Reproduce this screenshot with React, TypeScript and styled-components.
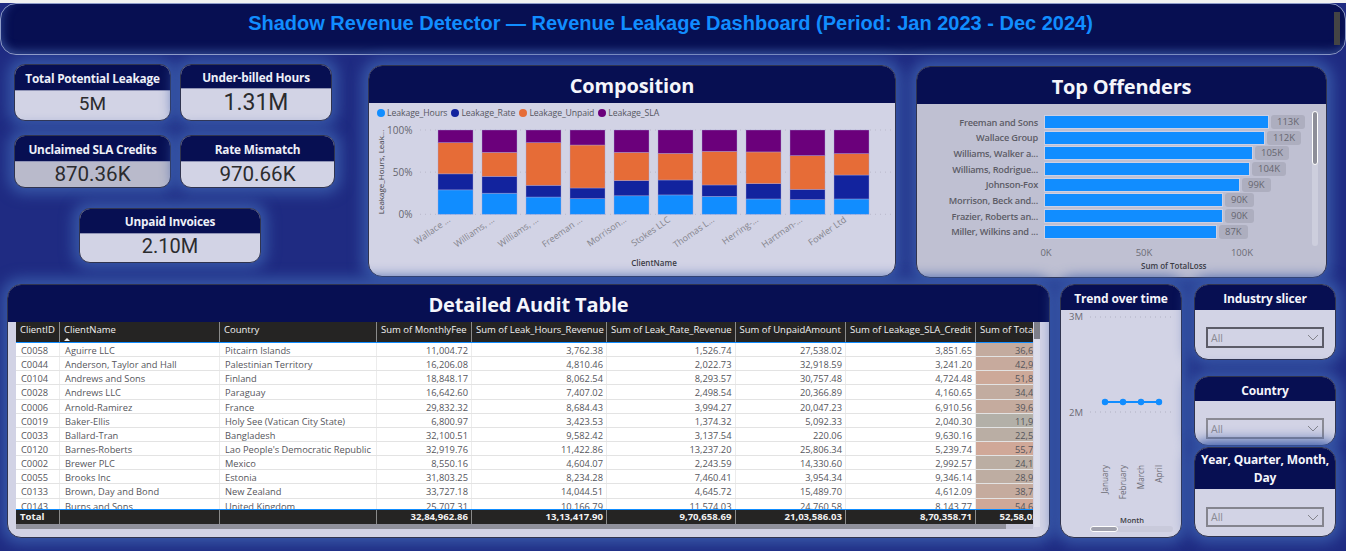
import React from "react";
import styled, { createGlobalStyle } from "styled-components";

const GlobalStyle = createGlobalStyle`
    html, body {
        margin: 0;
        padding: 0;
        overflow: hidden;
        background: #1f2b82;
    }
`;

const UI_FONT = `"Open Sans", "Noto Sans", sans-serif`;
const NAVY = "#070f52";
const PANEL = "#d2d3e5";
const GLOW = "0 0 14px 6px #3757a7";
const COLS = "44px 160px 157px 95px 135px 128.5px 110.5px 130px 85px";

interface AuditRow {
    id: string;
    name: string;
    country: string;
    fee: number;
    hours: number;
    rate: number;
    unpaid: number;
    sla: number;
}

const auditRows: AuditRow[] = [
    { id: "C0058", name: "Aguirre LLC", country: "Pitcairn Islands", fee: 11004.72, hours: 3762.38, rate: 1526.74, unpaid: 27538.02, sla: 3851.65 },
    { id: "C0044", name: "Anderson, Taylor and Hall", country: "Palestinian Territory", fee: 16206.08, hours: 4810.46, rate: 2022.73, unpaid: 32918.59, sla: 3241.2 },
    { id: "C0104", name: "Andrews and Sons", country: "Finland", fee: 18848.17, hours: 8062.54, rate: 8293.57, unpaid: 30757.48, sla: 4724.48 },
    { id: "C0028", name: "Andrews LLC", country: "Paraguay", fee: 16642.6, hours: 7407.02, rate: 2498.54, unpaid: 20366.89, sla: 4160.65 },
    { id: "C0006", name: "Arnold-Ramirez", country: "France", fee: 29832.32, hours: 8684.43, rate: 3994.27, unpaid: 20047.23, sla: 6910.56 },
    { id: "C0019", name: "Baker-Ellis", country: "Holy See (Vatican City State)", fee: 6800.97, hours: 3423.53, rate: 1374.32, unpaid: 5092.33, sla: 2040.3 },
    { id: "C0033", name: "Ballard-Tran", country: "Bangladesh", fee: 32100.51, hours: 9582.42, rate: 3137.54, unpaid: 220.06, sla: 9630.16 },
    { id: "C0120", name: "Barnes-Roberts", country: "Lao People's Democratic Republic", fee: 32919.76, hours: 11422.86, rate: 13237.2, unpaid: 25806.34, sla: 5239.74 },
    { id: "C0002", name: "Brewer PLC", country: "Mexico", fee: 8550.16, hours: 4604.07, rate: 2243.59, unpaid: 14330.6, sla: 2992.57 },
    { id: "C0055", name: "Brooks Inc", country: "Estonia", fee: 31803.25, hours: 8234.28, rate: 7460.41, unpaid: 3954.34, sla: 9346.14 },
    { id: "C0133", name: "Brown, Day and Bond", country: "New Zealand", fee: 33727.18, hours: 14044.51, rate: 4645.72, unpaid: 15489.7, sla: 4612.09 },
    { id: "C0143", name: "Burns and Sons", country: "United Kingdom", fee: 25707.31, hours: 10166.79, rate: 11574.03, unpaid: 24760.58, sla: 8143.77 },
];

const compositionBars = [
    { label: "Wallace ...", hours: 29, rate: 48, unpaid: 85 },
    { label: "Williams, ...", hours: 25, rate: 45, unpaid: 73.5 },
    { label: "Williams, ...", hours: 20.5, rate: 34.4, unpaid: 85 },
    { label: "Freeman ...", hours: 18.6, rate: 31.2, unpaid: 82.2 },
    { label: "Morrison...", hours: 22, rate: 40, unpaid: 73.5 },
    { label: "Stokes LLC", hours: 23, rate: 40.7, unpaid: 72.3 },
    { label: "Thomas L...", hours: 21.3, rate: 34.8, unpaid: 74.7 },
    { label: "Herring-...", hours: 18.2, rate: 36.4, unpaid: 74 },
    { label: "Hartman-...", hours: 17.4, rate: 29.6, unpaid: 69.6 },
    { label: "Fowler Ltd", hours: 18.2, rate: 46.6, unpaid: 72 },
];

const offenders = [
    { name: "Freeman and Sons", width: 223, value: "113K" },
    { name: "Wallace Group", width: 219, value: "112K" },
    { name: "Williams, Walker a...", width: 207, value: "105K" },
    { name: "Williams, Rodrigue...", width: 204, value: "104K" },
    { name: "Johnson-Fox", width: 194, value: "99K" },
    { name: "Morrison, Beck and...", width: 177, value: "90K" },
    { name: "Frazier, Roberts an...", width: 177, value: "90K" },
    { name: "Miller, Wilkins and ...", width: 171, value: "87K" },
];

const legend = [
    { name: "Leakage_Hours", color: "#118dff" },
    { name: "Leakage_Rate", color: "#12239e" },
    { name: "Leakage_Unpaid", color: "#e66c37" },
    { name: "Leakage_SLA", color: "#6b007b" },
];

const money = (n: number) => n.toLocaleString("en-US", { minimumFractionDigits: 2, maximumFractionDigits: 2 });

const lossOf = (r: AuditRow) => r.hours + r.rate + r.unpaid + r.sla;

// grey for small totals, salmon for large ones
const lossColor = (loss: number) => {
    const t = Math.min(1, Math.max(0, (loss - 11000) / 45000));
    const r = Math.round(178 + (208 - 178) * t);
    const g = Math.round(176 + (168 - 176) * t);
    const b = Math.round(168 + (152 - 168) * t);
    return `rgb(${r},${g},${b})`;
};

const Page = styled.div`
    width: 1346px;
    height: 551px;
    overflow: hidden;
    box-sizing: border-box;
    border-top: 3px solid #f1f1f1;
    background: #1f2b82;
    font-family: ${UI_FONT};
    display: flex;
    flex-direction: column;
`;

const TopBanner = styled.header`
    position: relative;
    height: 52px;
    flex: none;
    box-sizing: border-box;
    border: 1px solid #8f9cc9;
    border-radius: 16px;
    background: ${NAVY};
    box-shadow: inset 0 -9px 10px -6px #31488f, inset 9px 0 10px -7px #263a86;
    display: flex;
    justify-content: center;
    padding-top: 7px;
`;

const BannerTitle = styled.h1`
    margin: 0;
    padding-right: 5px;
    font-family: "Liberation Sans", Arial, sans-serif;
    font-size: 20px;
    font-weight: 700;
    line-height: 24px;
    color: #118dff;
`;

const BannerScroll = styled.div`
    position: absolute;
    top: 8px;
    right: 5px;
    width: 6px;
    height: 33px;
    background: #444;
`;

const TopRow = styled.section`
    display: flex;
    flex: none;
    height: 220px;
    margin-top: 9px;
`;

const KpiBlock = styled.div`
    width: 368px;
    flex: none;
    box-sizing: border-box;
    padding-left: 14px;
    display: flex;
    flex-direction: column;
`;

const KpiRow = styled.div<{ $top?: number; $left?: number }>`
    display: flex;
    gap: 9px;
    margin-top: ${(p) => p.$top ?? 0}px;
    margin-left: ${(p) => p.$left ?? 0}px;
`;

const KpiCard = styled.div<{ $w: number; $h: number; $muted?: boolean }>`
    width: ${(p) => p.$w}px;
    height: ${(p) => p.$h}px;
    box-sizing: border-box;
    border: 1px solid #30344f;
    border-radius: 11px;
    overflow: hidden;
    background: ${(p) => (p.$muted ? "#b9bacb" : PANEL)};
    box-shadow: ${GLOW};
    display: flex;
    flex-direction: column;
`;

const KpiTitle = styled.div<{ $h: number }>`
    height: ${(p) => p.$h}px;
    flex: none;
    background: ${NAVY};
    color: #eef0f8;
    font-size: 11.8px;
    font-weight: 700;
    letter-spacing: -0.2px;
    display: flex;
    align-items: center;
    justify-content: center;
    border-bottom: 1px solid #8f93b5;
    box-sizing: border-box;
`;

const KpiValue = styled.div<{ $size: number }>`
    flex: 1;
    display: flex;
    align-items: center;
    justify-content: center;
    font-family: Roboto, sans-serif;
    font-size: ${(p) => p.$size}px;
    color: #2b2b2e;
    padding-bottom: 4px;
`;

const Panel = styled.div<{ $w: number; $h: number; $top?: number; $left?: number; $tone?: string }>`
    position: relative;
    width: ${(p) => p.$w}px;
    height: ${(p) => p.$h}px;
    flex: none;
    margin-top: ${(p) => p.$top ?? 0}px;
    margin-left: ${(p) => p.$left ?? 0}px;
    box-sizing: border-box;
    border: 1px solid #30344f;
    border-radius: 14px;
    overflow: hidden;
    background: ${(p) => p.$tone ?? PANEL};
    box-shadow: ${GLOW};
    display: flex;
    flex-direction: column;
`;

const PanelTitle = styled.h2<{ $h: number; $size?: number; $shift?: number }>`
    margin: 0;
    height: ${(p) => p.$h}px;
    flex: none;
    box-sizing: border-box;
    padding-top: ${(p) => p.$shift ?? 2}px;
    background: ${NAVY};
    color: #f4f5fb;
    font-size: ${(p) => p.$size ?? 20}px;
    font-weight: 700;
    line-height: 1.42;
    text-align: center;
    letter-spacing: -0.15px;
    display: flex;
    align-items: center;
    justify-content: center;
`;

const Legend = styled.div`
    height: 20px;
    flex: none;
    box-sizing: border-box;
    display: flex;
    align-items: center;
    padding: 0 0 1px 8px;
    gap: 4px;
`;

const LegendItem = styled.span`
    display: flex;
    align-items: center;
    gap: 2px;
    font-size: 8.7px;
    letter-spacing: -0.1px;
    color: #55565f;
`;

const LegendDot = styled.i<{ $color: string }>`
    width: 8px;
    height: 8px;
    border-radius: 50%;
    background: ${(p) => p.$color};
`;

const ChartSvg = styled.svg`
    display: block;
    flex: none;
    font-family: ${UI_FONT};
`;

const TrendSvg = styled(ChartSvg)`
    margin-top: 1px;
`;

const OffenderBody = styled.div`
    padding-top: 12px;
    display: flex;
    flex-direction: column;
`;

const OffenderRow = styled.div`
    display: flex;
    align-items: center;
    height: 12px;
    margin-bottom: 3.7px;
`;

const OffenderName = styled.span`
    width: 121px;
    flex: none;
    text-align: right;
    font-size: 9.2px;
    font-weight: 600;
    letter-spacing: -0.2px;
    color: #5c5c66;
    white-space: nowrap;
`;

const OffenderBar = styled.div`
    height: 12px;
    margin-left: 7px;
    background: #118dff;
    box-shadow: 0 0 0 1px #cdd0e4;
`;

const ValuePill = styled.span`
    margin-left: 3px;
    height: 14px;
    padding: 0 6px;
    border-radius: 3px;
    background: #adaebf;
    color: #66666f;
    font-size: 9.5px;
    line-height: 14px;
`;

const AxisRow = styled.div`
    display: flex;
    margin: 4px 0 0 80px;
    font-size: 9.5px;
    color: #6c6c76;
`;

const AxisTick = styled.span`
    width: 98px;
    flex: none;
    text-align: center;
`;

const AxisTitle = styled.div`
    margin: 1px 0 0 224px;
    font-size: 8px;
    font-weight: 600;
    color: #3c3c44;
`;

const ChartScroll = styled.div`
    position: absolute;
    top: 44px;
    right: 8px;
    width: 6px;
    height: 135px;
    border-radius: 3px;
    background: #cdcedd;
`;

const ChartThumb = styled.div`
    width: 100%;
    height: 54px;
    box-sizing: border-box;
    border: 1px solid #fff;
    border-radius: 3px;
    background: #8d8e99;
`;

const BottomRow = styled.section`
    display: flex;
    flex: none;
    padding-left: 7px;
`;

const TableWrap = styled.div`
    width: 1017px;
    margin-left: 8px;
    overflow: hidden;
    flex: none;
    display: flex;
    flex-direction: column;
`;

const GridRow = styled.div`
    display: grid;
    grid-template-columns: ${COLS};
    flex: none;
`;

const HeadRow = styled(GridRow)`
    height: 20px;
    box-sizing: content-box;
    background: #252423;
    border-bottom: 1px solid #118dff;
`;

const HeadCell = styled.div`
    position: relative;
    box-sizing: border-box;
    padding: 2px 0 0 4px;
    border-right: 1px solid #8a8a8a;
    color: #f2f2f2;
    font-size: 9.5px;
    line-height: 12px;
    white-space: nowrap;
    overflow: hidden;
`;

const SortMark = styled.i`
    position: absolute;
    left: 4px;
    bottom: 1px;
    border-left: 3px solid transparent;
    border-right: 3px solid transparent;
    border-bottom: 3px solid #f2f2f2;
`;

const BodyRows = styled.div`
    height: 166px;
    overflow: hidden;
    flex: none;
    background: #fff;
`;

const BodyRow = styled(GridRow)`
    height: 14.15px;
    box-sizing: border-box;
    border-bottom: 1px solid #e3e3e3;
`;

const Cell = styled.div<{ $right?: boolean }>`
    box-sizing: border-box;
    padding: 0 3px 0 5px;
    border-right: 1px solid #ececec;
    color: #55555b;
    font-size: 9.3px;
    line-height: 15px;
    text-align: ${(p) => (p.$right ? "right" : "left")};
    white-space: nowrap;
    overflow: hidden;
`;

const FootRow = styled(GridRow)`
    height: 15px;
    box-sizing: border-box;
    background: #252423;
    border-top: 1px solid #118dff;
`;

const FootCell = styled.div<{ $right?: boolean }>`
    box-sizing: border-box;
    padding: 0 3px 0 4px;
    border-right: 1px solid #8a8a8a;
    color: #f2f2f2;
    font-size: 9.6px;
    font-weight: 700;
    line-height: 14px;
    text-align: ${(p) => (p.$right ? "right" : "left")};
    white-space: nowrap;
    overflow: hidden;
`;

const HorizontalBar = styled.div`
    width: 1017px;
    height: 5px;
    margin-left: 8px;
    background: #c3c4d6;
`;

const HorizontalThumb = styled.div`
    width: 990px;
    height: 100%;
    background: #8f909b;
`;

const VerticalBar = styled.div`
    position: absolute;
    top: 37px;
    left: 1026px;
    width: 6px;
    height: 205px;
    background: #dddeeb;
`;

const VerticalThumb = styled.div`
    width: 100%;
    height: 17px;
    background: #7d7e89;
`;

const SlicerColumn = styled.div`
    width: 142px;
    margin-left: 12px;
    flex: none;
    display: flex;
    flex-direction: column;
`;

const DropBody = styled.div<{ $top: number }>`
    padding: ${(p) => p.$top}px 11px 0;
`;

const DropBox = styled.div<{ $edge: string; $h: number }>`
    height: ${(p) => p.$h}px;
    box-sizing: border-box;
    border: 2px solid ${(p) => p.$edge};
    color: #8a8a93;
    font-size: 10.5px;
    padding: 0 3px;
    display: flex;
    align-items: center;
    justify-content: space-between;
`;

const Kpi: React.FC<{ title: string; value: string; w: number; h: number; head: number; size: number; muted?: boolean }> = ({ title, value, w, h, head, size, muted }) => (
    <KpiCard $w={w} $h={h} $muted={muted}>
        <KpiTitle $h={head}>{title}</KpiTitle>
        <KpiValue $size={size}>{value}</KpiValue>
    </KpiCard>
);

const Slicer: React.FC<{ title: string; h: number; head: number; top: number; edge: string; mt: number; box: number; shift?: number }> = ({ title, h, head, top, edge, mt, box, shift }) => (
    <Panel $w={142} $h={h} $top={mt}>
        <PanelTitle $h={head} $size={12} $shift={shift}>{title}</PanelTitle>
        <DropBody $top={top}>
            <DropBox $edge={edge} $h={box}>
                All
                <svg width="12" height="7" viewBox="0 0 12 7">
                    <polyline points="1,1 6,6 11,1" fill="none" stroke="#84848c" strokeWidth="1" />
                </svg>
            </DropBox>
        </DropBody>
    </Panel>
);

const CompositionChart = () => {
    const top = 7;
    const h = 84.3;
    const y = (p: number) => top + h - (h * p) / 100;
    return (
        <ChartSvg width="526" height="152" viewBox="0 0 526 152">
            {[100, 50, 0].map((t) => (
                <g key={t}>
                    <line x1="51" x2="522" y1={y(t)} y2={y(t)} stroke="#b9bacb" strokeWidth="1" strokeDasharray="1 4" />
                    <text x="43.5" y={y(t) + 3.5} textAnchor="end" fontSize="10" fill="#66666e">{t}%</text>
                </g>
            ))}
            <text transform="translate(15,49) rotate(-90)" textAnchor="middle" fontSize="8" fontWeight="500" fill="#3c3c44">Leakage_Hours, Leak...</text>
            {compositionBars.map((b, i) => {
                const x = 69 + 44 * i;
                return (
                    <g key={i} stroke="#a9a6d8" strokeOpacity="0.55" strokeWidth="0.7">
                        <rect x={x} y={y(b.hours)} width="35" height={y(0) - y(b.hours)} fill="#118dff" />
                        <rect x={x} y={y(b.rate)} width="35" height={y(b.hours) - y(b.rate)} fill="#12239e" />
                        <rect x={x} y={y(b.unpaid)} width="35" height={y(b.rate) - y(b.unpaid)} fill="#e66c37" />
                        <rect x={x} y={y(100)} width="35" height={y(b.unpaid) - y(100)} fill="#6b007b" />
                        <text transform={`translate(${x + 13},98) rotate(-35)`} textAnchor="end" fontSize="9" fill="#85858d" stroke="none">{b.label}</text>
                    </g>
                );
            })}
            <text x="285" y="143" textAnchor="middle" fontSize="8" fontWeight="600" fill="#3c3c44">ClientName</text>
        </ChartSvg>
    );
};

const TrendChart = () => {
    const months = ["January", "February", "March", "April"];
    return (
        <TrendSvg width="120" height="226" viewBox="0 0 120 226">
            <line x1="29" x2="112" y1="6" y2="6" stroke="#b0b1c2" strokeDasharray="1 4" />
            <line x1="29" x2="112" y1="101" y2="101" stroke="#b0b1c2" strokeDasharray="1 4" />
            <text x="22" y="9" textAnchor="end" fontSize="9.5" fill="#6c6c76">3M</text>
            <text x="22" y="105" textAnchor="end" fontSize="9.5" fill="#6c6c76">2M</text>
            <line x1="44" x2="98" y1="91" y2="91" stroke="#118dff" strokeWidth="2" />
            {months.map((m, i) => (
                <g key={m}>
                    <circle cx={44 + 18 * i} cy="91" r="3.2" fill="#118dff" />
                    <text transform={`translate(${47 + 18 * i},154) rotate(-90)`} textAnchor="end" fontSize="8.2" fill="#6c6c76">{m}</text>
                </g>
            ))}
            <text x="71" y="212" textAnchor="middle" fontSize="7.5" fontWeight="600" fill="#3c3c44">Month</text>
            <rect x="29" y="215" width="83" height="6" rx="3" fill="#c9cadb" />
            <rect x="29.5" y="215.5" width="27" height="5" rx="2.5" fill="#a0a1ad" stroke="#fff" />
        </TrendSvg>
    );
};

const App = () => {
    return (
        <Page>
            <GlobalStyle />
            <TopBanner>
                <BannerTitle>Shadow Revenue Detector — Revenue Leakage Dashboard (Period: Jan 2023 - Dec 2024)</BannerTitle>
                <BannerScroll />
            </TopBanner>

            <TopRow>
                <KpiBlock>
                    <KpiRow>
                        <Kpi title="Total Potential Leakage" value="5M" w={157} h={57} head={26} size={19} />
                        <Kpi title="Under-billed Hours" value="1.31M" w={152} h={57} head={24} size={23} />
                    </KpiRow>
                    <KpiRow $top={14}>
                        <Kpi title="Unclaimed SLA Credits" value="870.36K" w={157} h={53} head={26} size={20.6} muted />
                        <Kpi title="Rate Mismatch" value="970.66K" w={155} h={53} head={26} size={20.6} />
                    </KpiRow>
                    <KpiRow $top={20} $left={65}>
                        <Kpi title="Unpaid Invoices" value="2.10M" w={182} h={55} head={25} size={20} />
                    </KpiRow>
                </KpiBlock>

                <Panel $w={528} $h={212} $top={1}>
                    <PanelTitle $h={37} $shift={3}>Composition</PanelTitle>
                    <Legend>
                        {legend.map((l) => (
                            <LegendItem key={l.name}>
                                <LegendDot $color={l.color} />
                                {l.name}
                            </LegendItem>
                        ))}
                    </Legend>
                    <CompositionChart />
                </Panel>

                <Panel $w={411} $h={212} $top={2} $left={20} $tone="#bfc0d2">
                    <PanelTitle $h={37} $shift={4}>Top Offenders</PanelTitle>
                    <OffenderBody>
                        {offenders.map((o) => (
                            <OffenderRow key={o.name}>
                                <OffenderName>{o.name}</OffenderName>
                                <OffenderBar style={{ width: o.width }} />
                                <ValuePill>{o.value}</ValuePill>
                            </OffenderRow>
                        ))}
                        <AxisRow>
                            <AxisTick>0K</AxisTick>
                            <AxisTick>50K</AxisTick>
                            <AxisTick>100K</AxisTick>
                        </AxisRow>
                        <AxisTitle>Sum of TotalLoss</AxisTitle>
                    </OffenderBody>
                    <ChartScroll>
                        <ChartThumb />
                    </ChartScroll>
                </Panel>
            </TopRow>

            <BottomRow>
                <Panel $w={1043} $h={254}>
                    <PanelTitle $h={37} $shift={4}>Detailed Audit Table</PanelTitle>
                    <TableWrap>
                        <HeadRow>
                            <HeadCell>ClientID</HeadCell>
                            <HeadCell>ClientName<SortMark /></HeadCell>
                            <HeadCell>Country</HeadCell>
                            <HeadCell>Sum of MonthlyFee</HeadCell>
                            <HeadCell>Sum of Leak_Hours_Revenue</HeadCell>
                            <HeadCell>Sum of Leak_Rate_Revenue</HeadCell>
                            <HeadCell>Sum of UnpaidAmount</HeadCell>
                            <HeadCell>Sum of Leakage_SLA_Credit</HeadCell>
                            <HeadCell>Sum of TotalLoss</HeadCell>
                        </HeadRow>
                        <BodyRows>
                            {auditRows.map((r) => (
                                <BodyRow key={r.id}>
                                    <Cell>{r.id}</Cell>
                                    <Cell>{r.name}</Cell>
                                    <Cell>{r.country}</Cell>
                                    <Cell $right>{money(r.fee)}</Cell>
                                    <Cell $right>{money(r.hours)}</Cell>
                                    <Cell $right>{money(r.rate)}</Cell>
                                    <Cell $right>{money(r.unpaid)}</Cell>
                                    <Cell $right>{money(r.sla)}</Cell>
                                    <Cell $right style={{ background: lossColor(lossOf(r)) }}>{money(lossOf(r))}</Cell>
                                </BodyRow>
                            ))}
                        </BodyRows>
                        <FootRow>
                            <FootCell>Total</FootCell>
                            <FootCell />
                            <FootCell />
                            <FootCell $right>32,84,962.86</FootCell>
                            <FootCell $right>13,13,417.90</FootCell>
                            <FootCell $right>9,70,658.69</FootCell>
                            <FootCell $right>21,03,586.03</FootCell>
                            <FootCell $right>8,70,358.71</FootCell>
                            <FootCell $right>52,58,020.33</FootCell>
                        </FootRow>
                    </TableWrap>
                    <HorizontalBar>
                        <HorizontalThumb />
                    </HorizontalBar>
                    <VerticalBar>
                        <VerticalThumb />
                    </VerticalBar>
                </Panel>

                <Panel $w={122} $h={254} $left={10}>
                    <PanelTitle $h={25} $size={12}>Trend over time</PanelTitle>
                    <TrendChart />
                </Panel>

                <SlicerColumn>
                    <Slicer title="Industry slicer" h={76} head={25} top={17} edge="#5c5c68" mt={0} box={21} />
                    <Slicer title="Country" h={70} head={24} top={17} edge="#8a8a94" mt={16} box={21} shift={3} />
                    <Slicer title="Year, Quarter, Month, Day" h={90} head={41} top={18} edge="#84848e" mt={1} box={20} shift={0} />
                </SlicerColumn>
            </BottomRow>
        </Page>
    );
};

export default App;
